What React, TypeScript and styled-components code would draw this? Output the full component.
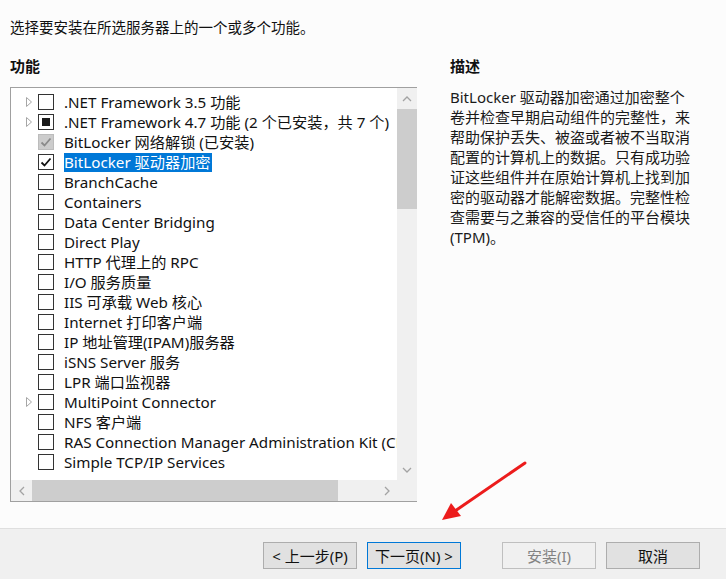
import React from "react";
import styled, { createGlobalStyle } from "styled-components";

const Global = createGlobalStyle`
  html, body { margin: 0; padding: 0; background: #fcfcfc; }
  body { font-family: "Noto Sans", "Noto Sans CJK SC", sans-serif; color: #000; }
  * { box-sizing: border-box; }
`;

const Page = styled.div`
  position: relative;
  width: 726px;
  height: 579px;
  display: flex;
  flex-direction: column;
  overflow: hidden;
`;

const Main = styled.div`
  flex: 1;
  display: flex;
  flex-direction: column;
  padding: 17px 0 0 10px;
  background: #fcfcfc;
`;

const Intro = styled.div`
  font-size: 14.5px;
  line-height: 20px;
  height: 20px;
  color: #111;
`;

const Columns = styled.div`
  display: grid;
  grid-template-columns: 407px 1fr;
  column-gap: 33px;
  margin-top: 19px;
`;

const Heading = styled.div`
  font-size: 15px;
  font-weight: 700;
  line-height: 20px;
  height: 20px;
  color: #111;
`;

const ListBox = styled.div`
  margin-top: 11px;
  width: 407px;
  height: 415px;
  border: 1px solid #a0a0a0;
  display: grid;
  grid-template-columns: 386px 20px;
  grid-template-rows: 1fr 21px;
  background: #fff;
`;

const ListContent = styled.div`
  overflow: hidden;
  padding-top: 4px;
  background: #fff;
  min-width: 0;
`;

const Row = styled.div`
  display: flex;
  align-items: center;
  height: 20px;
  white-space: nowrap;
  font-size: 15.2px;
  color: #111;
`;

const Expander = styled.div`
  width: 27px;
  flex: none;
  display: flex;
  justify-content: flex-end;
  padding-right: 6px;
`;

const Box = styled.div<{ $disabled?: boolean }>`
  width: 16px;
  height: 16px;
  flex: none;
  border: 1px solid ${(p) => (p.$disabled ? "#bcbcbc" : "#333")};
  background: ${(p) => (p.$disabled ? "#cccccc" : "#fff")};
  display: flex;
  align-items: center;
  justify-content: center;
  margin-right: 10px;
`;

const Square = styled.div`
  width: 8px;
  height: 8px;
  background: #1a1a1a;
`;

const Label = styled.span<{ $selected?: boolean }>`
  flex: none;
  line-height: 19px;
  padding: 0 1px 0 0;
  background: ${(p) => (p.$selected ? "#0078d7" : "transparent")};
  color: ${(p) => (p.$selected ? "#fff" : "#111")};
`;

const VScroll = styled.div`
  background: #f0f0f0;
  display: flex;
  flex-direction: column;
`;

const ArrowBtn = styled.div`
  height: 21px;
  flex: none;
  display: flex;
  align-items: center;
  justify-content: center;
`;

const VThumb = styled.div`
  height: 100px;
  background: #cdcdcd;
`;

const Track = styled.div`
  flex: 1;
`;

const HScroll = styled.div`
  background: #f0f0f0;
  display: flex;
`;

const HArrowBtn = styled.div`
  width: 21px;
  flex: none;
  display: flex;
  align-items: center;
  justify-content: center;
`;

const HThumb = styled.div`
  width: 306px;
  background: #cdcdcd;
`;

const Corner = styled.div`
  background: #f0f0f0;
`;

const Description = styled.div`
  margin-top: 11px;
  font-size: 15px;
  line-height: 20px;
  color: #1a1a1a;
  white-space: nowrap;
`;

const Footer = styled.div`
  height: 51px;
  flex: none;
  border-top: 1px solid #dfdfdf;
  background: #f0f0f0;
  display: flex;
  justify-content: flex-end;
  align-items: flex-start;
  padding: 13px 26px 0 0;
`;

const Button = styled.button<{ $primary?: boolean; $disabled?: boolean; $gap?: number }>`
  width: 94px;
  height: 27px;
  margin-left: ${(p) => p.$gap ?? 10}px;
  font-family: "Noto Sans", "Noto Sans CJK SC", sans-serif;
  font-size: 15px;
  line-height: 20px;
  padding: 0;
  background: ${(p) => (p.$disabled ? "#f0f0f0" : "#e1e1e1")};
  border: 1px solid
    ${(p) => (p.$primary ? "#0078d7" : p.$disabled ? "#bfbfbf" : "#adadad")};
  color: ${(p) => (p.$disabled ? "#838383" : "#111")};
`;

const ArrowOverlay = styled.svg`
  position: absolute;
  left: 0;
  top: 0;
  pointer-events: none;
`;

const Triangle = () => (
  <svg width="6" height="10" viewBox="0 0 6 10">
    <polygon points="0.5,0.5 5.5,5 0.5,9.5" fill="none" stroke="#a6a6a6" strokeWidth="1" />
  </svg>
);

const Check = ({ color }: { color: string }) => (
  <svg width="12" height="12" viewBox="0 0 12 12">
    <polyline points="1.5,6.5 4.5,9.5 10.5,2.5" fill="none" stroke={color} strokeWidth="1.8" />
  </svg>
);

const Chevron = ({ dir }: { dir: "up" | "down" | "left" | "right" }) => {
  const pts =
    dir === "up"
      ? "1,6 5,2 9,6"
      : dir === "down"
      ? "1,2 5,6 9,2"
      : dir === "left"
      ? "6,1 2,5 6,9"
      : "2,1 6,5 2,9";
  const w = dir === "up" || dir === "down" ? 10 : 8;
  const h = dir === "up" || dir === "down" ? 8 : 10;
  return (
    <svg width={w} height={h} viewBox={`0 0 ${w} ${h}`}>
      <polyline points={pts} fill="none" stroke="#a3a3a3" strokeWidth="1.3" />
    </svg>
  );
};

type Item = {
  label: string;
  expand?: boolean;
  state?: "none" | "partial" | "checked" | "installed";
  selected?: boolean;
};

const items: Item[] = [
  { label: ".NET Framework 3.5 功能", expand: true },
  { label: ".NET Framework 4.7 功能 (2 个已安装，共 7 个)", expand: true, state: "partial" },
  { label: "BitLocker 网络解锁 (已安装)", state: "installed" },
  { label: "BitLocker 驱动器加密", state: "checked", selected: true },
  { label: "BranchCache" },
  { label: "Containers" },
  { label: "Data Center Bridging" },
  { label: "Direct Play" },
  { label: "HTTP 代理上的 RPC" },
  { label: "I/O 服务质量" },
  { label: "IIS 可承载 Web 核心" },
  { label: "Internet 打印客户端" },
  { label: "IP 地址管理(IPAM)服务器" },
  { label: "iSNS Server 服务" },
  { label: "LPR 端口监视器" },
  { label: "MultiPoint Connector", expand: true },
  { label: "NFS 客户端" },
  { label: "RAS Connection Manager Administration Kit (CMAK)" },
  { label: "Simple TCP/IP Services" },
];

const descLines = [
  "BitLocker 驱动器加密通过加密整个",
  "卷并检查早期启动组件的完整性，来",
  "帮助保护丢失、被盗或者被不当取消",
  "配置的计算机上的数据。只有成功验",
  "证这些组件并在原始计算机上找到加",
  "密的驱动器才能解密数据。完整性检",
  "查需要与之兼容的受信任的平台模块",
  "(TPM)。",
];

export default function App() {
  return (
    <>
      <Global />
      <Page>
        <Main>
          <Intro>选择要安装在所选服务器上的一个或多个功能。</Intro>
          <Columns>
            <div>
              <Heading>功能</Heading>
              <ListBox>
                <ListContent>
                  {items.map((it, i) => (
                    <Row key={i}>
                      <Expander>{it.expand ? <Triangle /> : null}</Expander>
                      <Box $disabled={it.state === "installed"}>
                        {it.state === "partial" && <Square />}
                        {it.state === "checked" && <Check color="#111" />}
                        {it.state === "installed" && <Check color="#8a8a8a" />}
                      </Box>
                      <Label $selected={it.selected}>{it.label}</Label>
                    </Row>
                  ))}
                </ListContent>
                <VScroll>
                  <ArrowBtn>
                    <Chevron dir="up" />
                  </ArrowBtn>
                  <VThumb />
                  <Track />
                  <ArrowBtn>
                    <Chevron dir="down" />
                  </ArrowBtn>
                </VScroll>
                <HScroll>
                  <HArrowBtn>
                    <Chevron dir="left" />
                  </HArrowBtn>
                  <HThumb />
                  <Track />
                  <HArrowBtn>
                    <Chevron dir="right" />
                  </HArrowBtn>
                </HScroll>
                <Corner />
              </ListBox>
            </div>
            <div>
              <Heading>描述</Heading>
              <Description>
                {descLines.map((l, i) => (
                  <div key={i}>{l}</div>
                ))}
              </Description>
            </div>
          </Columns>
        </Main>
        <Footer>
          <Button>&lt; 上一步(P)</Button>
          <Button $primary>下一页(N) &gt;</Button>
          <Button $disabled $gap={41}>
            安装(I)
          </Button>
          <Button>取消</Button>
        </Footer>
        <ArrowOverlay width="726" height="579" viewBox="0 0 726 579">
          <line x1="525" y1="463" x2="455" y2="511" stroke="#ec1c1c" strokeWidth="3" strokeLinecap="round" />
          <polygon points="442,520 451,503 461,516" fill="#ec1c1c" />
        </ArrowOverlay>
      </Page>
    </>
  );
}
